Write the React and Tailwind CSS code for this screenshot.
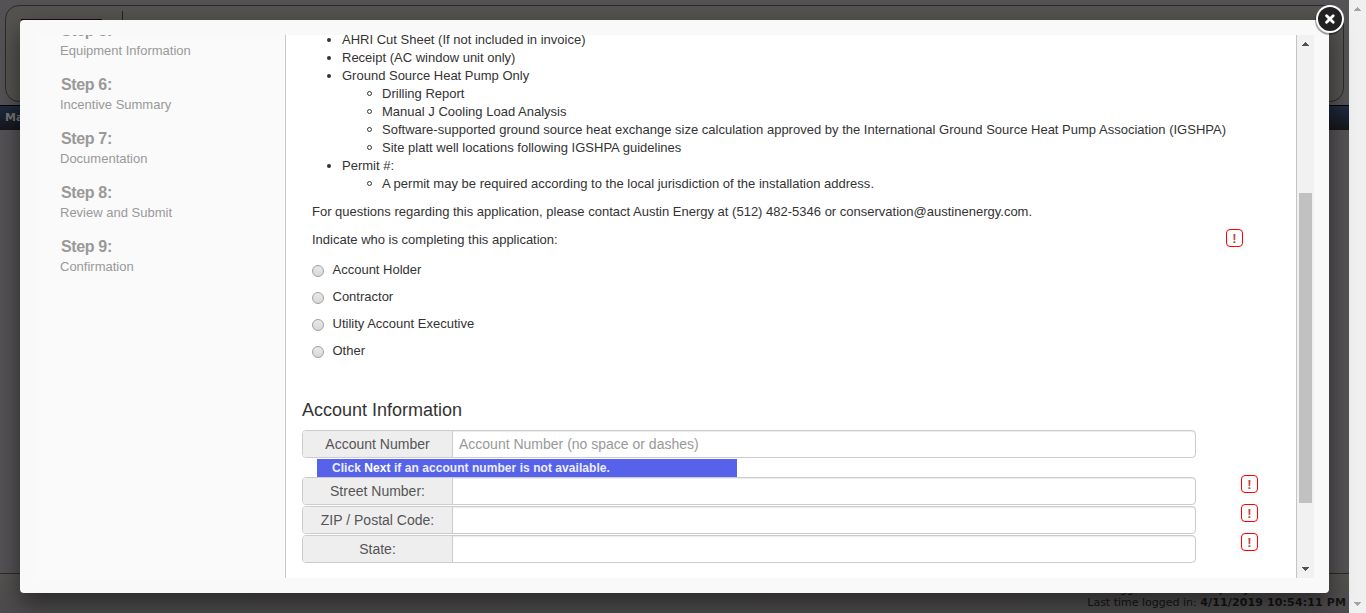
import React from "react";

const steps = [
  ["Step 5:", "Equipment Information"],
  ["Step 6:", "Incentive Summary"],
  ["Step 7:", "Documentation"],
  ["Step 8:", "Review and Submit"],
  ["Step 9:", "Confirmation"],
];

const documents = [
  { text: "AHRI Cut Sheet (If not included in invoice)" },
  { text: "Receipt (AC window unit only)" },
  {
    text: "Ground Source Heat Pump Only",
    children: [
      "Drilling Report",
      "Manual J Cooling Load Analysis",
      "Software-supported ground source heat exchange size calculation approved by the International Ground Source Heat Pump Association (IGSHPA)",
      "Site platt well locations following IGSHPA guidelines",
    ],
  },
  {
    text: "Permit #:",
    children: ["A permit may be required according to the local jurisdiction of the installation address."],
  },
];

const roles = ["Account Holder", "Contractor", "Utility Account Executive", "Other"];

function Arrow({ up, color }) {
  return (
    <svg width="7" height="4" viewBox="0 0 7 4" fill={color} shapeRendering="crispEdges">
      {up ? <path d="M3 0h1v1h1v1h1v1h1v1H0V3h1V2h1V1h1z" /> : <path d="M0 0h7v1H6v1H5v1H4v1H3V3H2V2H1V1H0z" />}
    </svg>
  );
}

function Required() {
  return (
    <span className="flex h-[18px] w-[17px] items-center justify-center rounded-[4px] border border-[#f00] text-[13px] leading-none font-bold text-[#b94a48]">
      !
    </span>
  );
}

function Field({ label, placeholder, required }) {
  return (
    <div className="flex h-7 items-start">
      <label className="flex h-7 w-[894px] rounded border border-[#ccc] bg-white text-[14px] leading-[26px]">
        <span className="w-[150px] shrink-0 rounded-l-[3px] border-r border-[#ccc] bg-[#eee] text-center text-[#555]">
          {label}
        </span>
        <input
          className="min-w-0 flex-1 rounded-r-[3px] px-1.5 shadow-[inset_0_1px_1px_rgba(0,0,0,0.075)] outline-none placeholder:text-[#999]"
          placeholder={placeholder}
        />
      </label>
      {required && (
        <div className="-mt-0.5 ml-[45px]">
          <Required />
        </div>
      )}
    </div>
  );
}

function PageBehind() {
  return (
    <div className="flex h-full bg-[#f0f0f0]">
      <div className="flex min-w-0 flex-1 flex-col bg-[#545254]">
        <div className="px-[5px] pt-[5px] pb-[3px]">
          <div className="flex h-[97px] rounded-[14px] border border-[#2c2b2c] bg-[#55534f]">
            <div className="mt-[13px] ml-[15px] h-4 w-[81px] bg-[#180c14]" />
            <div className="mt-[5px] ml-5 h-20 w-px bg-[#222]" />
          </div>
        </div>
        <div className="h-[25px] border-t border-black bg-linear-to-b from-[#1e2b40] to-[#15161b] pl-[5px] font-['DejaVu_Sans'] text-[11px] leading-[23px] font-bold text-[#777]">
          Main
        </div>
        <div className="flex-1" />
        <div className="h-10 border-t border-[#2c2b2a] bg-linear-to-b from-[#555350] to-[#4c4a4c] pt-[9px] pr-[3px] text-right font-['DejaVu_Sans'] text-[11px] leading-[13px] whitespace-nowrap text-[#141414]">
          <div className="pr-[96px]">Logged in as: <b>Trade, Ally</b></div>
          <div>Last time logged in: <b className="tracking-[0.13px]">4/11/2019 10:54:11 PM</b></div>
        </div>
      </div>
      <div className="flex w-[17px] shrink-0 flex-col items-center justify-between pt-[7px] pb-[7px]">
        <Arrow up color="#a3a3a3" />
        <Arrow color="#a3a3a3" />
      </div>
    </div>
  );
}

export default function App() {
  return (
    <div className="relative h-[613px] w-[1366px] overflow-hidden font-['Liberation_Sans',sans-serif] text-[13px] leading-[18px] text-[#333]">
      <PageBehind />
      <div className="absolute top-5 left-5 h-[573px] w-[1309px] rounded bg-[#f9f9f9] p-[15px] shadow-[0_10px_25px_rgba(0,0,0,0.5)]">
        <div className="flex h-[543px]">
          <aside className="w-[251px] shrink-0 overflow-hidden border-r border-[#c8c8c8] bg-[#fafafa] pl-[25px] text-[#999]">
            <div className="-mt-[14px]">
              {steps.map(([title, name]) => (
                <div key={title} className="h-[54px] leading-5">
                  <div className="pl-px text-[16px] font-bold tracking-[-0.35px]">{title}</div>
                  <div>{name}</div>
                </div>
              ))}
            </div>
          </aside>
          <main className="min-w-0 flex-1 overflow-hidden bg-white">
            <div className="-mt-1 pl-[26px]">
              <ul className="pl-[30px]">
                {documents.map((doc) => (
                  <li
                    key={doc.text}
                    className="before:mr-[11px] before:-ml-[15px] before:inline-block before:h-1 before:w-1 before:rounded-full before:bg-[#333] before:align-[2px]"
                  >
                    {doc.text}
                    {doc.children && (
                      <ul className="pl-10">
                        {doc.children.map((c) => (
                          <li
                            key={c}
                            className="tracking-[0.007px] before:mr-[10px] before:-ml-[15px] before:inline-block before:h-[5px] before:w-[5px] before:rounded-full before:border before:border-[#333] before:align-[2px]"
                          >
                            {c}
                          </li>
                        ))}
                      </ul>
                    )}
                  </li>
                ))}
              </ul>
              <p className="mt-2.5 tracking-[0.003px]">
                For questions regarding this application, please contact Austin Energy at (512) 482-5346 or conservation@austinenergy.com.
              </p>
              <div className="mt-2.5 flex h-[18px]">
                <p className="w-[914px]">Indicate who is completing this application:</p>
                <div className="-mt-0.5"><Required /></div>
              </div>
              <div className="mt-3">
                {roles.map((role) => (
                  <label key={role} className="flex h-[27px]">
                    <span className="mt-1 mr-[8.5px] h-3 w-3 rounded-full border border-[#a0a0a0] bg-linear-to-b from-[#e9e9e9] to-[#d8d8d8]" />
                    {role}
                  </label>
                ))}
              </div>
            </div>
            <section className="mt-[29px] pl-4">
              <h4 className="h-8 text-[18px] leading-6 text-[#333]">Account Information</h4>
              <Field label="Account Number" placeholder="Account Number (no space or dashes)" />
              <div className="mt-px ml-[15px] h-[18px] w-[420px] bg-[#5562e9] pl-[15px] text-[12px] font-bold tracking-[0.05px] text-[#eef]">
                Click <span className="text-white">Next</span> if an account number is not available.
              </div>
              <div className="flex flex-col gap-px">
                <Field label="Street Number:" required />
                <Field label="ZIP / Postal Code:" required />
                <Field label="State:" required />
              </div>
            </section>
          </main>
          <div className="flex w-[18px] shrink-0 flex-col items-center border-l border-[#c4c4c4] bg-[#f1f1f1] py-[7px]">
            <Arrow up color="#505050" />
            <div className="mt-[147px] h-[310px] w-[13px] bg-[#c1c1c1]" />
            <div className="mt-auto"><Arrow color="#505050" /></div>
          </div>
        </div>
      </div>
      <svg className="absolute top-[3px] left-[1313px]" width="34" height="34" viewBox="0 0 34 34">
        <circle cx="16.5" cy="17.5" r="14.5" fill="#000" opacity="0.35" />
        <circle cx="17" cy="16" r="13" fill="#222" stroke="#fff" strokeWidth="2" />
        <path d="M13.6 12.8l6.6 6.4M20.2 12.8l-6.6 6.4" stroke="#fff" strokeWidth="2.9" strokeLinecap="round" />
      </svg>
    </div>
  );
}
